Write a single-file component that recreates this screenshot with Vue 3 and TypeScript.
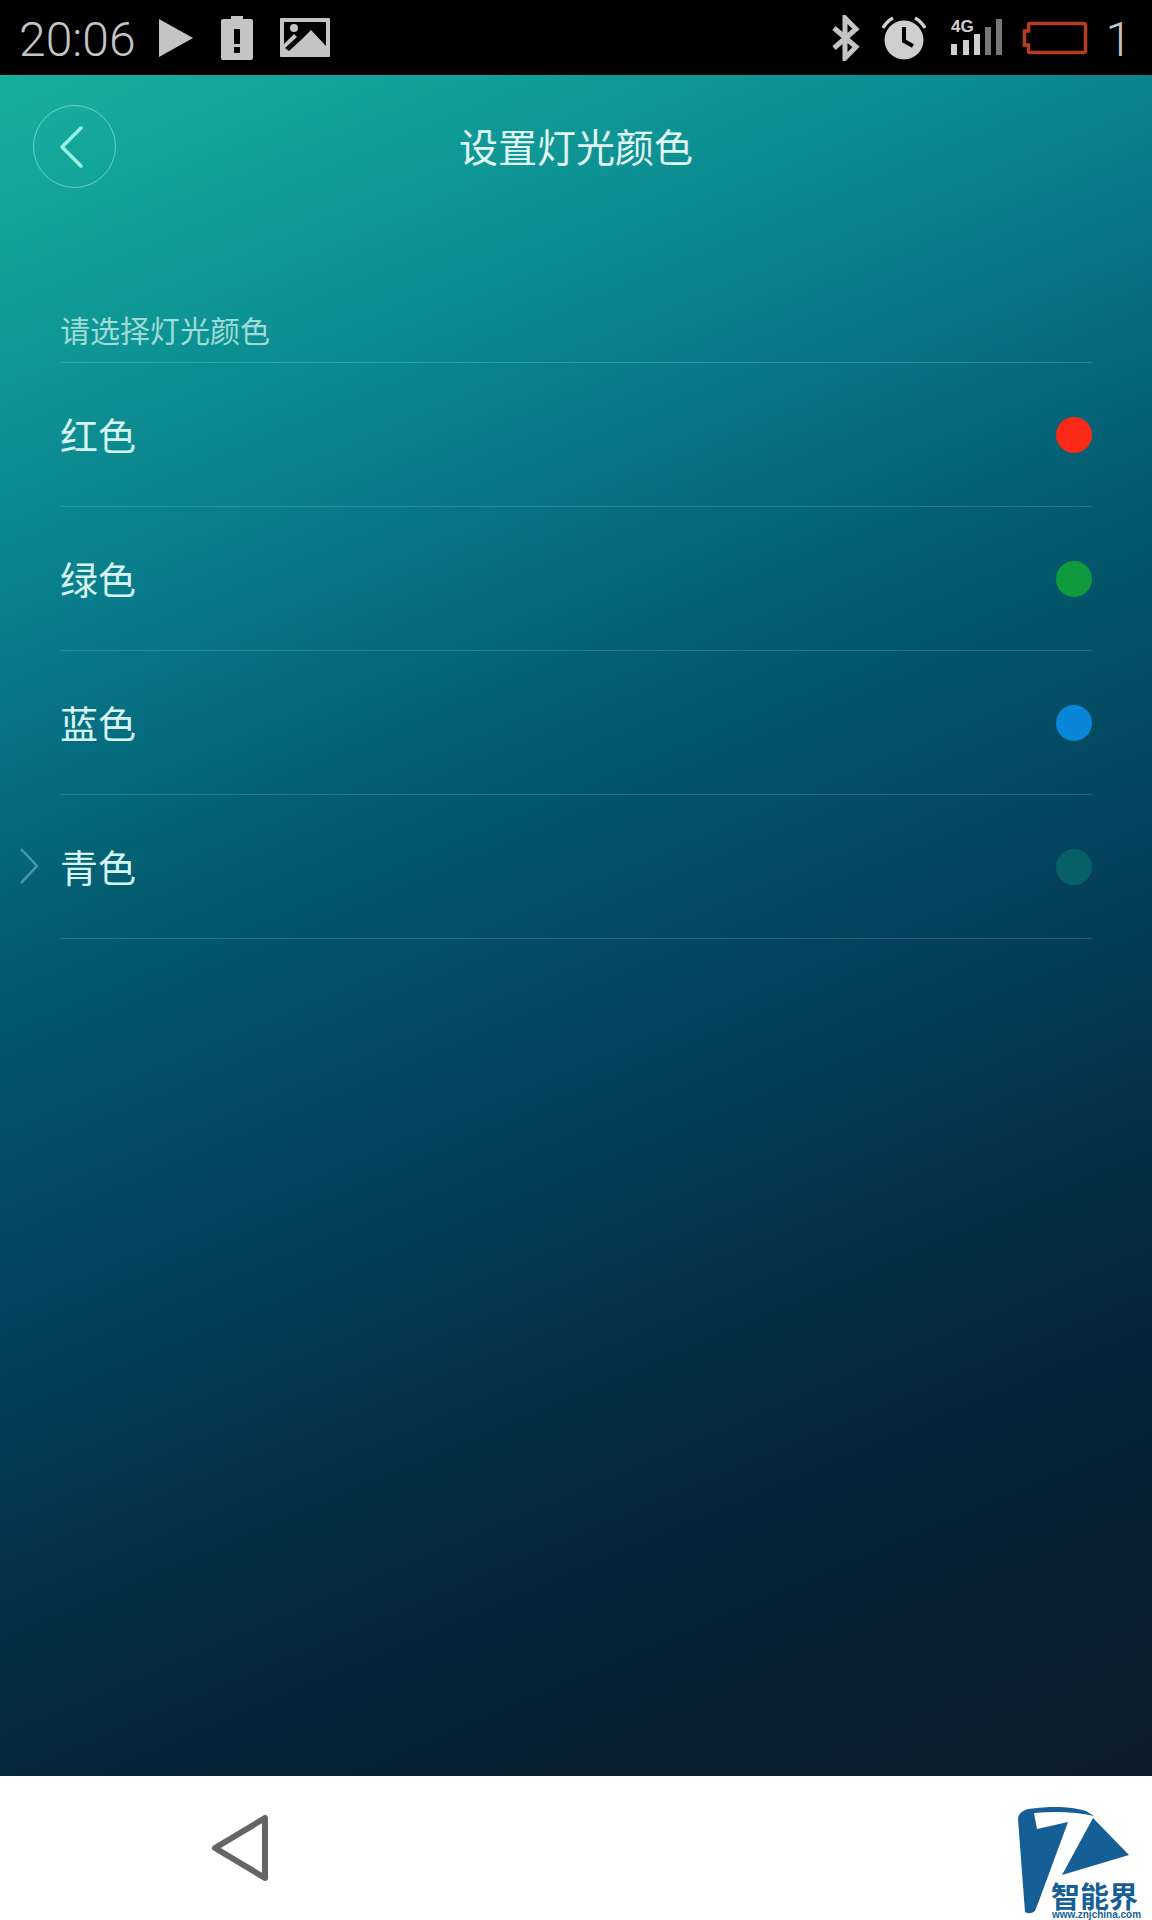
<template>
  <div class="phone">
    <!-- Status bar -->
    <div class="status-bar">
      <div class="status-left">
        <span class="time">20:06</span>
        <svg class="ic-play" width="36" height="38" viewBox="0 0 36 38"><path d="M1 0 L35 19 L1 38 Z" fill="#c4c4c4" /></svg>
        <svg class="ic-batt" width="32" height="44" viewBox="0 0 32 44">
          <path fill-rule="evenodd" fill="#c4c4c4" d="M10 0h12v3h8a2 2 0 0 1 2 2v37a2 2 0 0 1-2 2H2a2 2 0 0 1-2-2V5a2 2 0 0 1 2-2h8zM13 13v15h6V13zM13 31v6h6v-6z" />
        </svg>
        <svg class="ic-image" width="50" height="39" viewBox="0 0 50 39">
          <path fill-rule="evenodd" fill="#c4c4c4" d="M1 0h48a1 1 0 0 1 1 1v37a1 1 0 0 1-1 1H1a1 1 0 0 1-1-1V1a1 1 0 0 1 1-1zM4 4H46V28L31 12L22 21L9 33L5 30L17 19L14 16L4 26Z" />
          <circle cx="14" cy="10" r="4" fill="#c4c4c4" />
        </svg>
      </div>
      <div class="status-right">
        <svg class="ic-bt" width="30" height="46" viewBox="0 0 30 46">
          <path d="M3 13 L25 32 L14 43 V3 L25 14 L3 33" fill="none" stroke="#c4c4c4" stroke-width="5" />
        </svg>
        <svg class="ic-alarm" width="44" height="44" viewBox="0 0 44 44">
          <circle cx="22" cy="24" r="19.5" fill="#cfcfcf" />
          <path d="M22 11 V25 L31 30" fill="none" stroke="#000" stroke-width="4" />
          <path d="M1 12 Q5 5 11 2 M43 12 Q39 5 33 2" fill="none" stroke="#cfcfcf" stroke-width="3.5" />
        </svg>
        <svg class="ic-signal" width="54" height="40" viewBox="0 0 54 40">
          <text x="0" y="14" class="net">4G</text>
          <rect x="0" y="26" width="6" height="11" fill="#d0d0d0" />
          <rect x="12" y="22" width="6" height="15" fill="#d0d0d0" />
          <rect x="23" y="16" width="6" height="21" fill="#d0d0d0" />
          <rect x="34" y="9" width="6" height="28" fill="#787878" />
          <rect x="45" y="1" width="6" height="36" fill="#787878" />
        </svg>
        <svg class="ic-low" width="66" height="36" viewBox="0 0 66 36">
          <path d="M8 3.5 H62 a1.5 1.5 0 0 1 1.5 1.5 V31 a1.5 1.5 0 0 1-1.5 1.5 H8 a1.5 1.5 0 0 1-1.5-1.5 V25 H2.5 V11 H6.5 V5 a1.5 1.5 0 0 1 1.5-1.5z" fill="none" stroke="#b53d22" stroke-width="3.5" />
        </svg>
        <span class="battery-num">1</span>
      </div>
    </div>

    <!-- Main screen -->
    <main class="screen">
      <header class="title-bar">
        <button class="back" type="button" aria-label="返回">
          <svg width="26" height="42" viewBox="0 0 26 42"><path d="M23 2 L4 21 L23 40" fill="none" stroke="#9df0e2" stroke-width="3.5" stroke-linecap="round" stroke-linejoin="round" /></svg>
        </button>
        <h1 class="title">设置灯光颜色</h1>
      </header>

      <section class="list">
        <div class="list-label">请选择灯光颜色</div>
        <div v-for="item in colors" :key="item.name" class="row">
          <svg v-if="item.selected" class="marker" width="20" height="36" viewBox="0 0 20 36"><path d="M2 1 L18 18 L2 35" fill="none" stroke="#4b97a4" stroke-width="2.5" /></svg>
          <span class="row-name">{{ item.name }}</span>
          <span class="dot" :style="{ background: item.color }" />
        </div>
      </section>
    </main>

    <!-- Nav bar -->
    <footer class="nav">
      <svg class="nav-back" width="60" height="68" viewBox="0 0 60 68"><path d="M4 34 L54 4 V64 Z" fill="none" stroke="#666464" stroke-width="6" stroke-linejoin="round" /></svg>
      <svg class="logo" width="128" height="113" viewBox="0 0 128 113">
        <path fill="#155f96" d="M0 12 Q0 5 10 2 Q45 -3 68 4 L76 9 Q50 3 16 6 L19 22 L50 15 L22 91 L17 104 Q12 108 7 105 Z" />
        <path fill="#155f96" d="M75 11 L111 48 L44 68 Z" />
        <text x="33" y="101" class="logo-cn">智能界</text>
        <text x="34" y="111" class="logo-url">www.znjchina.com</text>
      </svg>
    </footer>
  </div>
</template>

<script setup lang="ts">
interface LightColor {
  name: string
  color: string
  selected?: boolean
}

const colors: LightColor[] = [
  { name: '红色', color: '#fb2a18' },
  { name: '绿色', color: '#0f9a3e' },
  { name: '蓝色', color: '#0a86d8' },
  { name: '青色', color: '#075f68', selected: true },
]
</script>

<style>
html, body { margin: 0; padding: 0; background: #000; }
</style>

<style scoped>
.phone {
  width: 1152px;
  height: 1920px;
  display: flex;
  flex-direction: column;
  overflow: hidden;
  font-family: "Noto Sans CJK SC", "Liberation Sans", sans-serif;
}

.status-bar {
  height: 75px;
  flex: none;
  background: #000;
  display: flex;
  justify-content: space-between;
  align-items: center;
  padding: 0 20px 0 19px;
  box-sizing: border-box;
}
.status-left, .status-right { display: flex; align-items: center; }
.time {
  font-family: Roboto, "Liberation Sans", sans-serif;
  font-weight: 300;
  font-size: 48px;
  line-height: 75px;
  color: #c4c4c4;
  width: 139px;
  margin-top: 3px;
}
.ic-play { margin-right: 27px; }
.ic-batt { margin-right: 27px; }
.ic-bt { margin-right: 21px; }
.ic-alarm { margin-right: 25px; }
.ic-signal { margin-right: 17px; }
.net { font: 700 17px "Liberation Sans", sans-serif; fill: #d0d0d0; }
.ic-low { margin-right: 17px; }
.battery-num {
  font-family: Roboto, "Liberation Sans", sans-serif;
  font-weight: 300;
  font-size: 48px;
  line-height: 75px;
  color: #c4c4c4;
  margin-top: 3px;
}

.screen {
  flex: 1;
  background: linear-gradient(157deg, #16b09f 0%, #0e9494 15%, #08778a 28%, #035a6e 41%, #03425c 57%, #043149 69%, #062438 80%, #0c1b2a 100%);
  padding: 30px 60px 0;
  box-sizing: border-box;
}

.title-bar {
  position: relative;
  height: 83px;
  display: flex;
  justify-content: center;
  align-items: center;
}
.back {
  position: absolute;
  left: -27px;
  top: 0;
  width: 83px;
  height: 83px;
  box-sizing: border-box;
  border: 1px solid rgba(180, 240, 230, 0.55);
  border-radius: 50%;
  background: transparent;
  padding: 0 8px 0 0;
  display: flex;
  align-items: center;
  justify-content: center;
}
.title {
  margin: 0 0 2px;
  font-size: 39px;
  font-weight: 400;
  line-height: 81px;
  color: #e2f7f4;
}

.list { margin-top: 122px; }
.list-label {
  height: 53px;
  box-sizing: border-box;
  font-size: 30px;
  line-height: 38px;
  color: #9fdcd6;
  border-bottom: 1px solid rgba(170, 235, 230, 0.22);
}
.row {
  position: relative;
  height: 144px;
  box-sizing: border-box;
  display: flex;
  align-items: center;
  justify-content: space-between;
  border-bottom: 1px solid rgba(170, 235, 230, 0.18);
}
.row-name {
  font-size: 38px;
  color: #d6f5f2;
  margin-bottom: 2px;
}
.dot {
  width: 36px;
  height: 36px;
  border-radius: 50%;
}
.marker {
  position: absolute;
  left: -41px;
  top: 53px;
}

.nav {
  height: 144px;
  flex: none;
  background: #fff;
  display: flex;
  justify-content: space-between;
  align-items: flex-start;
  padding: 0 6px 0 211px;
  box-sizing: border-box;
}
.nav-back { margin-top: 38px; }
.logo { margin-top: 31px; }
.logo-cn { font: 700 29px "Noto Sans CJK SC", sans-serif; fill: #155f96; }
.logo-url { font: 700 10px "Liberation Sans", sans-serif; fill: #155f96; }
</style>
